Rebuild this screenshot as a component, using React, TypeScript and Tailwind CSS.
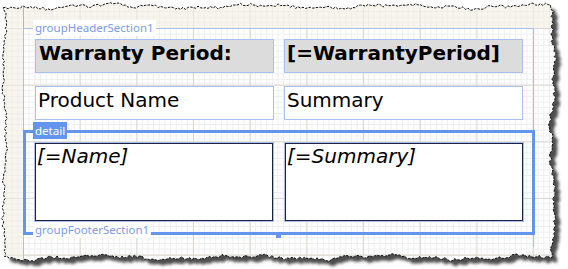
import React from "react";

// seeded jitter so the torn edge is the same on every render
const rng = (seed: number) => {
  let s = seed;
  return () => {
    s = (s * 1103515245 + 12345) % 2147483648;
    return s / 2147483648;
  };
};

const tornPath = () => {
  const r = rng(11);
  const wob = (i: number, a: number) => Math.sin(i * 0.11) * a + Math.sin(i * 0.37 + 1) * a * 0.6;
  const pts: string[] = [];
  let i = 0;
  for (let x = 3; x <= 552; x += 2.5) pts.push(`${x} ${(5 + wob(i++, 1.6) + r() * 3).toFixed(1)}`);
  for (let y = 9; y <= 256; y += 2.5) pts.push(`${(551 + wob(i++, 1.8) + r() * 3).toFixed(1)} ${y}`);
  for (let x = 552; x >= 3; x -= 2.5) pts.push(`${x} ${(256 + wob(i++, 1.6) + r() * 3).toFixed(1)}`);
  for (let y = 256; y >= 9; y -= 2.5) pts.push(`${(3.5 + wob(i++, 1.4) + r() * 2.5).toFixed(1)} ${y}`);
  return "M" + pts.join(" L") + " Z";
};

const TornEdge = () => {
  const d = tornPath();
  return (
    <svg className="absolute inset-0 pointer-events-none" width={568} height={269}>
      <defs>
        <clipPath id="outside">
          <path d={`M0 0H568V269H0Z ${d}`} clipRule="evenodd" />
        </clipPath>
        <filter id="soft" x="-5%" y="-5%" width="110%" height="110%">
          <feGaussianBlur stdDeviation="1.4" />
        </filter>
      </defs>
      <g clipPath="url(#outside)">
        <rect width={568} height={269} fill="#fff" />
        <path d={d} transform="translate(5 5)" fill="#4d4d4d" filter="url(#soft)" />
      </g>
      <path d={d} fill="none" stroke="#111" strokeWidth={1} strokeDasharray="2.5 1.2" />
    </svg>
  );
};

const Label = ({ text, className }: { text: string; className: string }) => (
  <span
    className={`absolute left-[9px] bg-white px-[2px] text-[11.5px] leading-[16px] text-[#7b9be8] font-['Noto_Sans',sans-serif] ${className}`}
  >
    {text}
  </span>
);

export default function App() {
  return (
    <div className="relative w-[568px] h-[269px] overflow-hidden bg-white font-['DejaVu_Sans',Verdana,sans-serif] text-black [background-image:linear-gradient(to_right,#dbd7ce_1px,transparent_1px),linear-gradient(to_bottom,#dbd7ce_1px,transparent_1px),linear-gradient(to_right,#eeeeee_1px,transparent_1px),linear-gradient(to_bottom,#eeeeee_1px,transparent_1px)] [background-size:56.69px_56.69px,56.69px_56.69px,5.669px_5.669px,5.669px_5.669px] [background-position:23px_28px]">
      <div className="flex h-full">
        {/* left margin */}
        <div className="flex w-[24px] shrink-0 flex-col">
          <div className="h-[28px] border-r border-[#dca5a5] bg-[#f4efe2]/60" />
          <div className="flex-1 border-r border-[#bdbad8] bg-[#f4efe2]/60" />
        </div>

        <div className="flex flex-1 flex-col">
          <div className="h-[28px] bg-[#f4efe2]/60" />

          {/* group header */}
          <div className="relative w-[510px] border-t border-r border-[#a9c0ee] pt-[10px] pl-[11px] pb-[10px]">
            <Label text="groupHeaderSection1" className="top-[-9px]" />
            <div className="flex gap-[10px]">
              <div className="h-[34px] w-[239px] border border-[#a9c0ee] bg-[#dcdcdc] pl-[3px] pt-[2px] text-[20px] font-bold leading-[23px]">
                Warranty Period:
              </div>
              <div className="h-[34px] w-[239px] border border-[#a9c0ee] bg-[#dcdcdc] pl-[2px] pt-[2px] text-[20px] font-bold leading-[23px]">
                [=WarrantyPeriod]
              </div>
            </div>
            <div className="mt-[13px] flex gap-[10px]">
              <div className="h-[34px] w-[239px] border border-[#a9c0ee] bg-white pl-[2px] pt-[2px] text-[20px] leading-[23px]">
                Product Name
              </div>
              <div className="h-[34px] w-[239px] border border-[#a9c0ee] bg-white pl-[2px] pt-[2px] text-[20px] leading-[23px]">
                Summary
              </div>
            </div>
          </div>

          {/* detail */}
          <div className="relative ml-[-1px] w-[512px] border-[3px] border-[#6495ed] pt-[10px] pl-[9px] pb-[11px]">
            <span className="absolute left-[7px] top-[-11px] h-[17px] bg-[#6495ed] px-[2px] text-[11.5px] leading-[17px] text-white font-['Noto_Sans',sans-serif]">
              detail
            </span>
            <div className="flex gap-[12px]">
              <div className="h-[78px] w-[238px] border border-[#1e2140] bg-white pl-[1px] pt-[1px] text-[20px] italic leading-[23px] ring-1 ring-[#a9c0ee]">
                [=Name]
              </div>
              <div className="h-[78px] w-[238px] border border-[#1e2140] bg-white pl-[1px] pt-[1px] text-[20px] italic leading-[23px] ring-1 ring-[#a9c0ee]">
                [=Summary]
              </div>
            </div>
            <span className="absolute left-[250px] bottom-[-6px] h-[5px] w-[5px] bg-[#6495ed]" />
          </div>

          {/* group footer */}
          <div className="relative h-[12px] w-[510px] border-r border-[#a9c0ee]">
            <Label text="groupFooterSection1" className="top-[-13px]" />
          </div>
        </div>
      </div>
      <TornEdge />
    </div>
  );
}
